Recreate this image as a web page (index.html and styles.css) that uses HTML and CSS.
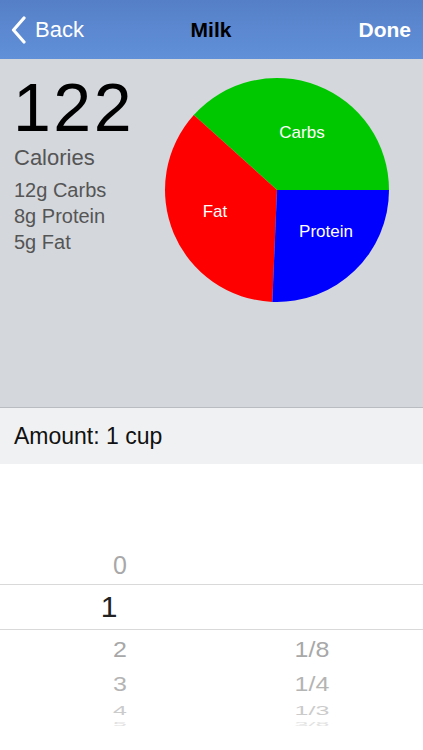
FILE: index.html
```html
<!DOCTYPE html>
<html lang="en">
<head>
    <meta charset="UTF-8">
    <title>Milk</title>
    <link rel="stylesheet" href="styles.css">
</head>
<body>
<div class="nav">
    <div class="back">
        <svg class="chevron" width="15" height="28" viewBox="0 0 15 28">
            <polyline points="13,2 2.5,14 13,26" fill="none" stroke="#fff" stroke-width="3.2" stroke-linecap="round" stroke-linejoin="round"/>
        </svg>
        <span>Back</span>
    </div>
    <div class="title">Milk</div>
    <div class="done">Done</div>
</div>
<div class="summary">
    <div class="facts">
        <div class="kcal">122</div>
        <div class="kcal-label">Calories</div>
        <ul class="macros">
            <li>12g Carbs</li>
            <li>8g Protein</li>
            <li>5g Fat</li>
        </ul>
    </div>
    <svg class="pie" width="224" height="224" viewBox="0 0 224 224">
        <path d="M112,112 L224,112 A112,112 0 0 0 28.77,37.06 Z" fill="#00c800"/>
        <path d="M112,112 L28.77,37.06 A112,112 0 0 0 107.31,223.9 Z" fill="#ff0000"/>
        <path d="M112,112 L107.31,223.9 A112,112 0 0 0 224,112 Z" fill="#0000ff"/>
        <text x="137" y="60" text-anchor="middle">Carbs</text>
        <text x="50" y="139" text-anchor="middle">Fat</text>
        <text x="161" y="159" text-anchor="middle">Protein</text>
    </svg>
</div>
<div class="amount">Amount: 1 cup</div>
<div class="picker">
    <div class="row r0"><span>0</span><span></span></div>
    <div class="row selected"><span>1</span><span></span></div>
    <div class="row r2"><span>2</span><span>1/8</span></div>
    <div class="row r3"><span>3</span><span>1/4</span></div>
    <div class="row r4"><span>4</span><span>1/3</span></div>
    <div class="row r5"><span>5</span><span>3/8</span></div>
</div>
</body>
</html>
```
FILE: styles.css
```css
*{
    margin: 0;
    padding: 0;
}
li{
    list-style: none;
}
body{
    width: 423px;
    height: 750px;
    overflow: hidden;
    font-family: "Liberation Sans", Arial, sans-serif;
    background: #fff;
}
.nav{
    height: 59px;
    display: grid;
    grid-template-columns: 1fr auto 1fr;
    align-items: center;
    padding: 0 12px 0 11px;
    background: linear-gradient(#5580c8, #6190d8);
    color: #fff;
    line-height: 26px;
}
.nav .back{
    display: flex;
    align-items: center;
    gap: 9px;
    font-size: 22px;
}
.nav .chevron{
    display: block;
    margin-top: 1px;
}
.nav .title{
    color: #000;
    font-weight: bold;
    font-size: 21px;
}
.nav .done{
    justify-self: end;
    font-weight: bold;
    font-size: 21px;
}
.summary{
    height: 334px;
    padding: 14px 0 0 14px;
    background: #d4d7dc;
    display: flex;
    align-items: flex-start;
}
.facts{
    width: 151px;
}
.kcal{
    font-size: 68px;
    line-height: 68px;
    letter-spacing: 2.5px;
    margin-left: -1px;
    color: #000;
}
.kcal-label{
    margin-top: 4px;
    font-size: 22px;
    line-height: 26px;
    color: #555;
}
.macros{
    margin-top: 6px;
    font-size: 20px;
    line-height: 26px;
    color: #555;
}
.pie{
    display: block;
    margin-top: 5px;
}
.pie text{
    fill: #fff;
    font-family: "Liberation Sans", Arial, sans-serif;
    font-size: 17px;
}
.amount{
    height: 56px;
    border-top: 1px solid #b9bcc1;
    background: #f0f1f2;
    padding-left: 14px;
    font-size: 23px;
    line-height: 56px;
    color: #111;
}
.picker{
    padding-top: 82px;
}
.picker .row{
    display: grid;
    grid-template-columns: 240px 144px;
    text-align: center;
    font-size: 25px;
    color: #a8a8a8;
    overflow: hidden;
}
.picker .row span{
    display: block;
}
.picker .r0{
    height: 38px;
    line-height: 38px;
}
.picker .selected{
    height: 44px;
    line-height: 44px;
    border-top: 1px solid #d9d9d9;
    border-bottom: 1px solid #d9d9d9;
    font-size: 30px;
    color: #222;
}
.picker .selected span:first-child{
    padding-right: 22px;
}
.picker .r2{
    height: 38px;
    line-height: 38px;
}
.picker .r2 span{
    transform: scaleY(0.9);
}
.picker .r3{
    height: 32px;
    line-height: 32px;
    color: #b4b4b4;
}
.picker .r3 span{
    transform: scaleY(0.82);
}
.picker .r4{
    height: 20px;
    line-height: 20px;
    color: #cbcbcb;
}
.picker .r4 span{
    transform: scaleY(0.5);
}
.picker .r5{
    height: 8px;
    line-height: 8px;
    color: #e2e2e2;
}
.picker .r5 span{
    transform: scaleY(0.22);
}
```
